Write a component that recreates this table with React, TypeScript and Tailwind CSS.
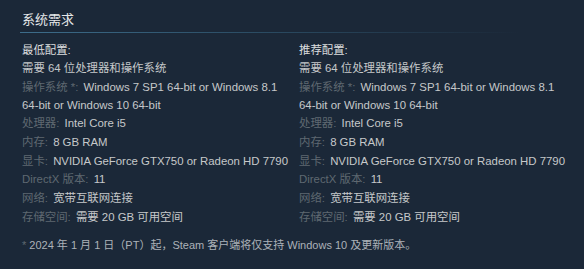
const rows: [string, string][] = [
  ["操作系统 *:", "Windows 7 SP1 64-bit or Windows 8.1 64-bit or Windows 10 64-bit"],
  ["处理器:", "Intel Core i5"],
  ["内存:", "8 GB RAM"],
  ["显卡:", "NVIDIA GeForce GTX750 or Radeon HD 7790"],
  ["DirectX 版本:", "11"],
  ["网络:", "宽带互联网连接"],
  ["存储空间:", "需要 20 GB 可用空间"],
];

function Column({ title }: { title: string }) {
  return (
    <div className="pr-[8px]">
      <div className="text-[#dcdedf] leading-[18px]">{title}</div>
      <ul className="flex flex-col gap-[0.7px]">
        <li className="leading-[18px] text-[#c6c8ca]">需要 64 位处理器和操作系统</li>
        {rows.map(([label, value]) => (
          <li key={label} className="leading-[18px]">
            <span className="text-[#5f6871]">{label}</span>{" "}
            <span className="text-[#c6c8ca] ml-[2px]">{value}</span>
          </li>
        ))}
      </ul>
    </div>
  );
}

export default function App() {
  return (
    <div
      className="w-[584px] h-[269px] bg-[#1b2838] pl-[22px] pr-[7px] pt-[11px] text-[11.4px]"
      style={{ fontFamily: '"Liberation Sans", Arial, "Noto Sans CJK SC", sans-serif' }}
    >
      <h2 className="text-[13px] leading-[18px] text-[#e5e7e9] pb-[3px]">系统需求</h2>
      <div className="h-[1px] -ml-[2px] mb-[8px] bg-gradient-to-r from-[#3d6d8b] via-[#2a4a61] to-transparent w-[500px]" />
      <div className="grid grid-cols-[277px_1fr]">
        <Column title="最低配置:" />
        <Column title="推荐配置:" />
      </div>
      <p className="mt-[10px] text-[#acb2b8] leading-[18px] text-[11px]">
        <span className="text-[#5f6871]">*</span> 2024 年 1 月 1 日（PT）起，Steam 客户端将仅支持 Windows 10 及更新版本。
      </p>
    </div>
  );
}
